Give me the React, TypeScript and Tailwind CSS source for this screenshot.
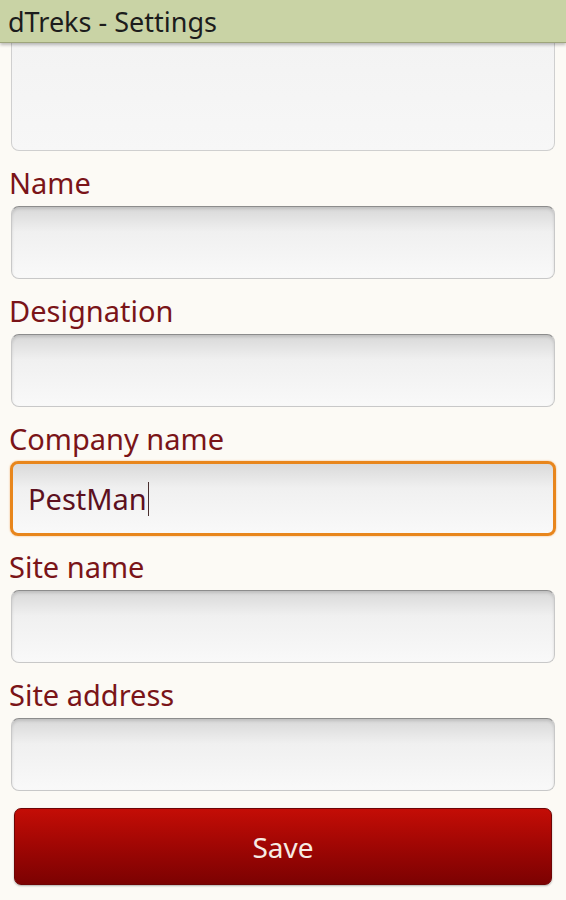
import React from 'react';

// Settings screen of the dTreks app
const fields = [
  { label: 'Name', value: '' },
  { label: 'Designation', value: '' },
  { label: 'Company name', value: 'PestMan', focused: true },
  { label: 'Site name', value: '' },
  { label: 'Site address', value: '' },
];

const FieldBox: React.FC<{ value: string; focused?: boolean }> = ({ value, focused }) => {
  if (focused) {
    return (
      <div className="h-[75px] -m-[1px] rounded-[8px] border-[3px] border-[#e8861c] bg-linear-to-b from-[#dadada] via-[#f0f0f0] via-35% to-[#f9f9f9] flex items-center px-[15px] shadow-[0_0_2px_#f0b070]">
        <span className="text-[29px] text-[#5c1020] leading-none">{value}</span>
        <span className="w-px h-[34px] bg-[#4a3030] ml-[1px]"></span>
      </div>
    );
  }
  return (
    <div className="h-[73px] rounded-[8px] border border-[#c8c8c8] border-t-[#8c8c8c] bg-linear-to-b from-[#d8d8d8] via-[#f0f0f0] via-35% to-[#f9f9f9] shadow-[inset_0_2px_3px_rgba(0,0,0,0.12)]"></div>
  );
};

export default function App() {
  return (
    <div className="w-[566px] h-[900px] overflow-hidden bg-[#fcfaf5] flex flex-col" style={{ fontFamily: '"Noto Sans", "Open Sans", sans-serif' }}>
      {/* Title bar */}
      <div className="h-[43px] shrink-0 bg-[#c9d3a5] border-b border-[#9ea57c] shadow-[0_2px_3px_rgba(0,0,0,0.25)] flex items-center px-[8px] z-10">
        <span className="text-[27px] text-[#1c1c1c] leading-none">dTreks - Settings</span>
      </div>

      <div className="px-[11px] flex flex-col">
        {/* scrolled text area, top hidden under title bar */}
        <div className="h-[108px] rounded-b-[8px] border border-t-0 border-[#cfcfcf] bg-linear-to-b from-[#f3f3f3] to-[#f7f7f7]"></div>

        {fields.map((f) => (
          <div key={f.label} className="flex flex-col">
            <label className="pt-[15px] mb-[6px] -ml-[2px] text-[29px] leading-[34px] text-[#7a1418]">{f.label}</label>
            <FieldBox value={f.value} focused={f.focused} />
          </div>
        ))}
      </div>

      {/* Save button */}
      <div className="px-[14px] pt-[17px]">
        <button className="w-full h-[77px] rounded-[7px] border border-[#6e0505] bg-linear-to-b from-[#c40d06] to-[#7c0202] text-[28px] text-[#f6ebe3] shadow-[0_1px_2px_rgba(0,0,0,0.3)]">
          Save
        </button>
      </div>
    </div>
  );
}
